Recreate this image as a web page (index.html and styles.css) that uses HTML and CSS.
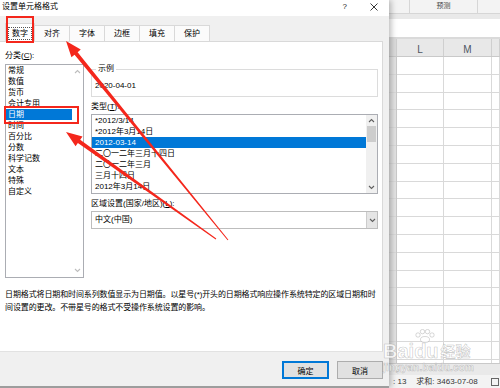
FILE: index.html
```html
<!DOCTYPE html>
<html lang="zh-CN">
<head>
  <meta charset="UTF-8" />
  <meta name="viewport" content="width=device-width, initial-scale=1.0" />
  <title>设置单元格格式</title>
  <link rel="stylesheet" href="styles.css">
</head>
<body>
  <div class="screen">
    <!-- Format Cells dialog -->
    <div class="dialog">
      <div class="titlebar">
        <span class="title">设置单元格格式</span>
        <span class="help">?</span>
        <svg class="close" width="8" height="8" viewBox="0 0 8 8"><path d="M0.5 0.5 L7.5 7.5 M7.5 0.5 L0.5 7.5" stroke="#222" stroke-width="0.9" fill="none"/></svg>
      </div>

      <div class="tabs">
        <div class="tab active"><span class="focus">数字</span></div>
        <div class="tab">对齐</div>
        <div class="tab">字体</div>
        <div class="tab">边框</div>
        <div class="tab">填充</div>
        <div class="tab">保护</div>
      </div>

      <div class="panel">
        <div class="cols">
          <div class="left">
            <div class="label">分类(<u>C</u>):</div>
            <div class="listbox category">
              <ul class="items">
                <li>常规</li>
                <li>数值</li>
                <li>货币</li>
                <li>会计专用</li>
                <li class="selected">日期</li>
                <li>时间</li>
                <li>百分比</li>
                <li>分数</li>
                <li>科学记数</li>
                <li>文本</li>
                <li>特殊</li>
                <li>自定义</li>
              </ul>
              <div class="vscroll plain">
                <svg class="arrow" width="7" height="5" viewBox="0 0 7 5"><path d="M1 4 L3.5 1.5 L6 4" /></svg>
                <svg class="arrow" width="7" height="5" viewBox="0 0 7 5"><path d="M1 1 L3.5 3.5 L6 1" /></svg>
              </div>
            </div>
          </div>

          <div class="right">
            <fieldset class="sample">
              <legend>示例</legend>
              <div class="sample-value">2020-04-01</div>
            </fieldset>

            <div class="label">类型(<u>T</u>):</div>
            <div class="listbox types">
              <ul class="items">
                <li>*2012/3/14</li>
                <li>*2012年3月14日</li>
                <li class="selected">2012-03-14</li>
                <li>二〇一二年三月十四日</li>
                <li>二〇一二年三月</li>
                <li>三月十四日</li>
                <li>2012年3月14日</li>
              </ul>
              <div class="vscroll">
                <div class="arrow-box">
                  <svg class="arrow" width="7" height="5" viewBox="0 0 7 5"><path d="M1 4 L3.5 1.5 L6 4" /></svg>
                </div>
                <div class="thumb"></div>
                <div class="track"></div>
                <div class="arrow-box">
                  <svg class="arrow" width="7" height="5" viewBox="0 0 7 5"><path d="M1 1 L3.5 3.5 L6 1" /></svg>
                </div>
              </div>
            </div>

            <div class="label">区域设置(国家/地区)(<u>L</u>):</div>
            <div class="combo">
              <span class="combo-value">中文(中国)</span>
              <span class="drop">
                <svg class="arrow" width="7" height="5" viewBox="0 0 7 5"><path d="M1 1 L3.5 3.5 L6 1" /></svg>
              </span>
            </div>
          </div>
        </div>

        <p class="desc">日期格式将日期和时间系列数值显示为日期值。以星号(*)开头的日期格式响应操作系统特定的区域日期和时<br>间设置的更改。不带星号的格式不受操作系统设置的影响。</p>
      </div>

      <div class="footer">
        <button class="btn default">确定</button>
        <button class="btn">取消</button>
      </div>
    </div>

    <!-- Worksheet behind the dialog -->
    <div class="sheet">
      <div class="ribbon">
        <div class="rib-group first"></div>
        <div class="rib-group">预测</div>
        <div class="rib-group last"></div>
      </div>
      <div class="ribbon-foot"></div>
      <div class="fxbar"></div>
      <div class="colhead">
        <div class="hcell corner"></div>
        <div class="hcell">L</div>
        <div class="hcell">M</div>
        <div class="hcell"></div>
      </div>
      <div class="cells">
        <div class="col rowhead"></div>
        <div class="col"></div>
        <div class="col"></div>
        <div class="col"></div>
      </div>
      <div class="hscroll"></div>
      <div class="status">
        <span>: 13</span>
        <span class="sum">求和: 3463-07-08</span>
        <span class="view-icon"></span>
      </div>
    </div>

    <!-- watermark -->
    <div class="watermark">
      <div class="wm-logo">
        <span class="wm-bai">Bai</span>
        <span class="wm-du">du
          <svg class="paw" width="20" height="14" viewBox="0 0 20 14">
            <circle cx="3" cy="6" r="2.2"/>
            <circle cx="7.5" cy="2.6" r="2.2"/>
            <circle cx="12.5" cy="2.6" r="2.2"/>
            <circle cx="17" cy="6" r="2.2"/>
            <ellipse cx="10" cy="10.5" rx="4.5" ry="3"/>
          </svg>
        </span>
        <span class="wm-cn">经验</span>
      </div>
      <div class="wm-url">jingyan.baidu.com</div>
    </div>

    <!-- red annotations -->
    <svg class="marks" width="500" height="388" viewBox="0 0 500 388">
      <rect x="7" y="17" width="26" height="25" />
      <rect x="5" y="107" width="73" height="16" />
      <polygon points="66,41 80.75,49.6 77.65,52.14 228.39,239.68 227.61,240.32 74.55,54.66 71.45,57.2" />
      <polygon points="66,132 82.51,136.41 80.19,139.66 216.29,238.59 215.71,239.41 77.87,142.92 75.55,146.17" />
    </svg>
  </div>
</body>
</html>
```

FILE: styles.css
```css
* {
  box-sizing: border-box;
}

html, body {
  margin: 0;
  padding: 0;
  width: 500px;
  height: 388px;
  overflow: hidden;
  background: #fff;
  color: #000;
  font-family: "Liberation Sans", "Noto Sans CJK SC", sans-serif;
  font-size: 8px;
}

.screen {
  position: relative;
  display: flex;
  width: 500px;
  height: 388px;
  overflow: hidden;
}

/* ---------- dialog ---------- */

.dialog {
  position: relative;
  z-index: 2;
  width: 389px;
  height: 388px;
  flex-shrink: 0;
  display: flex;
  flex-direction: column;
  background: #f0f0f0;
  border-bottom: 2px solid #9d9d9d;
  box-shadow: 2px 0 6px rgba(0, 0, 0, 0.28);
}

.titlebar {
  height: 16px;
  flex-shrink: 0;
  display: flex;
  align-items: center;
  padding: 0 11px 2px 2px;
  background: #fff;
}

.title {
  flex: 1;
  line-height: 10px;
}

.help {
  line-height: 10px;
  margin-right: 23px;
  color: #222;
}

.close {
  width: 8px;
  height: 8px;
}

.tabs {
  height: 25px;
  flex-shrink: 0;
  display: flex;
  align-items: flex-end;
  padding-left: 5px;
}

.tab {
  width: 35px;
  height: 16px;
  line-height: 15px;
  text-align: center;
  background: #fbfbfb;
  border: 1px solid #d9d9d9;
  border-left: none;
  border-bottom: none;
}

.tab.active {
  position: relative;
  z-index: 1;
  width: 30px;
  height: 19px;
  margin-bottom: -1px;
  padding-top: 2px;
  background: #fff;
  border-left: 1px solid #d9d9d9;
}

.tab .focus {
  display: inline-block;
  line-height: 11px;
  padding: 0 3px;
  outline: 1px dotted #555;
}

.panel {
  height: 311px;
  flex-shrink: 0;
  width: 383px;
  padding: 8px 4px 0 5px;
  background: #fff;
  border-top: 1px solid #d9d9d9;
  border-right: 1px solid #d9d9d9;
  border-bottom: 1px solid #e2e2e2;
  overflow: hidden;
}

.cols {
  display: grid;
  grid-template-columns: 79px 287px;
  column-gap: 7px;
}

.label {
  line-height: 11px;
}

.left .listbox {
  margin-top: 3px;
}

.listbox {
  display: flex;
  border: 1px solid #abadb3;
  background: #fff;
}

.items {
  flex: 1;
  list-style: none;
  margin: 0;
  padding: 0;
}

.items li {
  height: 11px;
  line-height: 11px;
  padding-left: 2px;
  white-space: nowrap;
}

.items li.selected {
  background: #0078d7;
  color: #fff;
}

.category {
  height: 214px;
}

.vscroll {
  width: 11px;
  display: flex;
  flex-direction: column;
  background: #f0f0f0;
}

.vscroll.plain {
  background: #fff;
  justify-content: space-between;
  align-items: center;
  padding: 4px 0;
}

.arrow {
  fill: none;
  stroke: #606060;
  stroke-width: 1.1;
}

.plain .arrow {
  stroke: #bdbdbd;
}

.arrow-box {
  height: 11px;
  display: flex;
  align-items: center;
  justify-content: center;
}

.thumb {
  height: 16px;
  margin: 0 1px;
  background: #cdcdcd;
}

.track {
  flex: 1;
}

.sample {
  margin: 14px 0 0;
  padding: 6px 3px 5px;
  border: 1px solid #dcdcdc;
}

.sample legend {
  padding: 0 2px;
  margin-left: 1px;
  line-height: 10px;
}

.sample-value {
  line-height: 11px;
}

.right > .label {
  margin-top: 4px;
}

.types {
  margin-top: 2px;
  height: 80px;
}

.types .items li {
  padding-left: 3px;
}

.combo {
  margin-top: 2px;
  height: 18px;
  display: flex;
  align-items: stretch;
  border: 1px solid #bdbdbd;
}

.combo-value {
  flex: 1;
  line-height: 16px;
  padding-left: 3px;
}

.drop {
  width: 11px;
  display: flex;
  align-items: center;
  justify-content: center;
  background: #e5e5e5;
  border-left: 1px solid #cccccc;
}

.desc {
  margin: 10px 0 0;
  line-height: 13px;
  letter-spacing: -0.12px;
  white-space: nowrap;
}

.footer {
  height: 34px;
  flex-shrink: 0;
  display: flex;
  justify-content: flex-end;
  align-items: flex-start;
  gap: 8px;
  padding: 9px 6px 0 0;
}

.btn {
  width: 46px;
  height: 18px;
  padding: 0;
  font: inherit;
  font-size: 8px;
  color: #000;
  background: #e1e1e1;
  border: 1px solid #adadad;
}

.btn.default {
  width: 47px;
  border-color: #0078d7;
  box-shadow: inset 0 0 0 1px #0078d7;
}

/* ---------- worksheet ---------- */

.sheet {
  flex: 1;
  min-width: 0;
  display: flex;
  flex-direction: column;
  background: #fff;
  overflow: hidden;
}

.ribbon {
  height: 13px;
  flex-shrink: 0;
  display: flex;
  background: #f3f3f3;
}

.rib-group {
  width: 68px;
  border-right: 1px solid #d6d6d6;
  text-align: center;
  font-size: 7px;
  line-height: 12px;
  color: #444;
}

.rib-group.first {
  width: 21px;
}

.rib-group.last {
  flex: 1;
  border-right: none;
}

.ribbon-foot {
  height: 6px;
  flex-shrink: 0;
  background: #e9e9e9;
  border-top: 1px solid #d6d6d6;
}

.fxbar {
  height: 20px;
  flex-shrink: 0;
  background: #fff;
  border-bottom: 2px solid #dadada;
}

.colhead,
.cells {
  display: grid;
  grid-template-columns: 8px 47px 48px minmax(0, 1fr);
}

.colhead {
  height: 18px;
  flex-shrink: 0;
  background: #e8e8e8;
  border-bottom: 1px solid #c9c9c9;
}

.hcell {
  border-right: 1px solid #cfcfcf;
  text-align: center;
  font-size: 10px;
  line-height: 12px;
  padding-top: 5px;
  color: #4d5562;
}

.hcell.corner {
  background: #dcdcdc;
}

.cells {
  flex: 1;
}

.col {
  border-right: 1px solid #d9d9d9;
  background-image: repeating-linear-gradient(to bottom, transparent 0, transparent 16.8px, #d9d9d9 16.8px, #d9d9d9 17.8px);
}

.col.rowhead {
  background-color: #e3e3e3;
  border-right-color: #c9c9c9;
}

.hscroll {
  height: 12px;
  flex-shrink: 0;
  background: #e9e9e9;
  border-top: 1px solid #c9c9c9;
}

.status {
  height: 13px;
  flex-shrink: 0;
  display: flex;
  align-items: center;
  padding-left: 4px;
  background: #f3f3f3;
  color: #333;
  line-height: 12px;
  white-space: nowrap;
}

.status .sum {
  margin-left: 10px;
}

.view-icon {
  width: 8px;
  height: 8px;
  margin-left: auto;
  margin-right: 1px;
  border: 1px solid #666;
}

/* ---------- watermark ---------- */

.watermark {
  position: absolute;
  left: 383px;
  top: 333px;
  z-index: 3;
  color: rgba(255, 255, 255, 0.75);
  -webkit-text-stroke: 0.6px rgba(130, 130, 130, 0.45);
  font-weight: bold;
  white-space: nowrap;
}

.wm-logo {
  display: flex;
  align-items: flex-end;
  height: 28px;
  font-size: 20px;
  line-height: 20px;
}

.wm-du {
  position: relative;
}

.paw {
  position: absolute;
  left: 1px;
  top: -12px;
  fill: rgba(255, 255, 255, 0.75);
  stroke: rgba(130, 130, 130, 0.45);
  stroke-width: 0.7;
}

.wm-cn {
  margin-left: 2px;
  font-size: 15px;
  line-height: 18px;
}

.wm-url {
  margin-top: 2px;
  font-size: 10px;
  line-height: 10px;
  letter-spacing: 0.2px;
}

/* ---------- red annotations ---------- */

.marks {
  position: absolute;
  left: 0;
  top: 0;
  z-index: 4;
  pointer-events: none;
}

.marks rect {
  fill: none;
  stroke: #f4271c;
  stroke-width: 2;
}

.marks polygon {
  fill: #f4271c;
}
```
